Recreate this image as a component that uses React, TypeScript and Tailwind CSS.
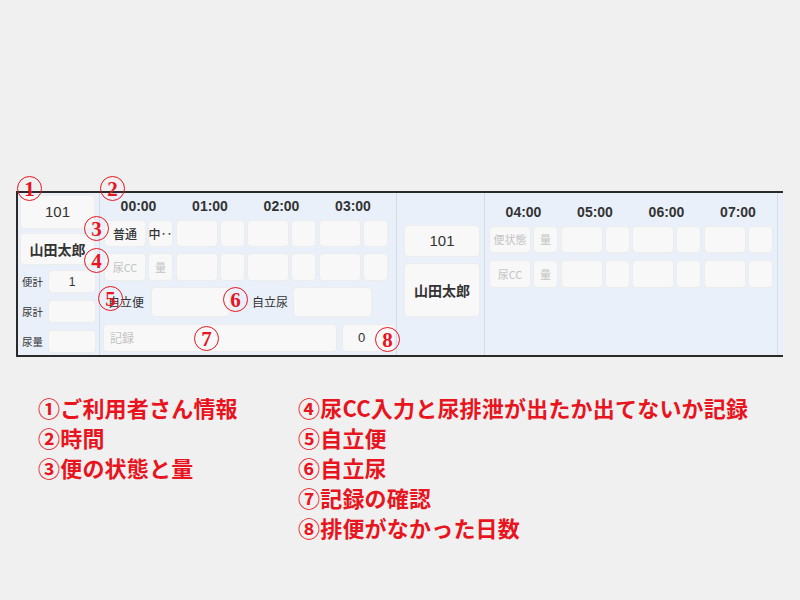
import React from "react";

const JP = { fontFamily: '"Noto Sans CJK JP", "Noto Sans", sans-serif' };
const LAT = { fontFamily: '"Liberation Sans", "Noto Sans CJK JP", sans-serif' };
const SERIF = { fontFamily: '"Liberation Serif", "DejaVu Serif", serif' };

function Cell({ w, h, children, tone = "dark" }: { w: string; h: string; children?: React.ReactNode; tone?: "dark" | "gray" }) {
  return (
    <div
      className={`${w} ${h} shrink-0 rounded-[4px] border border-[#ececec] bg-[#f8f8f8] flex items-center justify-center overflow-hidden whitespace-nowrap ${
        tone === "gray" ? "text-[#c4c4c4] text-[11px]" : "text-[#333] text-[12px] font-medium"
      }`}
    >
      {children}
    </div>
  );
}

function HourRow({ first, second, tone, h }: { first?: string; second?: string; tone?: "dark" | "gray"; h: string }) {
  return (
    <div className="flex gap-[2.5px]">
      {[0, 1, 2, 3].map((i) => (
        <div key={i} className="flex gap-[2px]">
          <Cell w="w-[42px]" h={h} tone={tone}>{i === 0 ? first : null}</Cell>
          <Cell w="w-[25px]" h={h} tone={tone}>{i === 0 ? second : null}</Cell>
        </div>
      ))}
    </div>
  );
}

function Header({ times }: { times: string[] }) {
  return (
    <div className="flex gap-[2.5px] h-[26px] items-center" style={LAT}>
      {times.map((t) => (
        <div key={t} className="w-[69px] text-center text-[14px] font-bold text-[#333]">
          {t}
        </div>
      ))}
    </div>
  );
}

function StatRow({ label, value, mt }: { label: string; value?: string; mt: string }) {
  return (
    <div className={`flex items-center ${mt}`}>
      <div className="w-[28px] pl-[2px] text-[10.5px] text-[#333]">{label}</div>
      <div className="w-[48px] h-[23px] rounded-[4px] border border-[#ececec] bg-[#f8f8f8] flex items-center justify-center text-[12px] text-[#333]" style={LAT}>
        {value}
      </div>
    </div>
  );
}

const RED = "text-[#e8141e]";

function Mark({ n, x, y }: { n: string; x: number; y: number }) {
  return (
    <div
      className="absolute w-[25px] h-[25px] rounded-full border-[1.5px] border-[#e8141e] flex items-center justify-center text-[#e8141e] font-bold text-[21px] leading-none"
      style={{ left: x, top: y, ...SERIF }}
    >
      <span className="mt-[1px]">{n}</span>
    </div>
  );
}

export default function App() {
  const legendL = ["①ご利用者さん情報", "②時間", "③便の状態と量"];
  const legendR = [
    "④尿CC入力と尿排泄が出たか出てないか記録",
    "⑤自立便",
    "⑥自立尿",
    "⑦記録の確認",
    "⑧排便がなかった日数",
  ];
  return (
    <div className="relative w-[800px] h-[600px] bg-[#f0f0f0] overflow-hidden" style={JP}>
      <div className="pt-[191px] pl-[16px]">
        <div className="w-[767px] h-[166px] border-t-2 border-b-2 border-l-2 border-[#2a2a2a] bg-[#e9f0f9] flex">
          {/* user col 1 */}
          <div className="w-[82px] shrink-0 border-r border-[#d6dce4] pl-[2px] pt-[2px]">
            <div className="w-[75px] h-[34px] rounded-[4px] border border-[#ececec] bg-[#f8f8f8] flex items-center justify-center text-[15px] text-[#333]" style={LAT}>
              101
            </div>
            <div className="mt-[4px] w-[75px] h-[32px] rounded-[4px] border border-[#ececec] bg-[#f8f8f8] flex items-center justify-center text-[14px] font-semibold text-[#333]">
              山田太郎
            </div>
            <StatRow label="便計" value="1" mt="mt-[5px]" />
            <StatRow label="尿計" mt="mt-[7px]" />
            <StatRow label="尿量" mt="mt-[7px]" />
          </div>
          {/* grid 1 */}
          <div className="w-[297px] shrink-0 border-r border-[#d6dce4] pl-[4px]">
            <Header times={["00:00", "01:00", "02:00", "03:00"]} />
            <div className="mt-[1px]">
              <HourRow first="普通" second="中‥" h="h-[27px]" />
            </div>
            <div className="mt-[6px]">
              <HourRow first="尿CC" second="量" tone="gray" h="h-[28px]" />
            </div>
            <div className="mt-[6px] flex items-center h-[30px]">
              <div className="w-[44px] pl-[4px] text-[12px] text-[#333]">自立便</div>
              <div className="ml-[3px] w-[79px] h-[30px] rounded-[4px] border border-[#ececec] bg-[#f8f8f8]" />
              <div className="ml-[22px] w-[36px] text-[12px] text-[#333] whitespace-nowrap">自立尿</div>
              <div className="ml-[5px] w-[79px] h-[30px] rounded-[4px] border border-[#ececec] bg-[#f8f8f8]" />
            </div>
            <div className="mt-[7px] flex items-center -ml-[1px]">
              <div className="w-[234px] h-[28px] rounded-[4px] border border-[#ececec] bg-[#f8f8f8] flex items-center pl-[6px] text-[12px] text-[#c4c4c4]">
                記録
              </div>
              <div className="ml-[5px] w-[53px] h-[28px] rounded-[4px] border border-[#ececec] bg-[#f8f8f8] flex items-center pl-[15px] text-[13px] text-[#333]" style={LAT}>
                0
              </div>
            </div>
          </div>
          {/* user col 2 */}
          <div className="w-[88px] shrink-0 border-r border-[#d6dce4] pl-[7px] pt-[32px]">
            <div className="w-[76px] h-[32px] rounded-[4px] border border-[#ececec] bg-[#f8f8f8] flex items-center justify-center text-[15px] text-[#333]" style={LAT}>
              101
            </div>
            <div className="mt-[6px] w-[76px] h-[54px] rounded-[4px] border border-[#ececec] bg-[#f8f8f8] flex items-center justify-center text-[14px] font-semibold text-[#333]">
              山田太郎
            </div>
          </div>
          {/* grid 2 */}
          <div className="w-[293px] shrink-0 border-r border-[#d6dce4] pl-[4px] pt-[6px]">
            <Header times={["04:00", "05:00", "06:00", "07:00"]} />
            <div className="mt-[1px]">
              <HourRow first="便状態" second="量" tone="gray" h="h-[27px]" />
            </div>
            <div className="mt-[7px]">
              <HourRow first="尿CC" second="量" tone="gray" h="h-[28px]" />
            </div>
          </div>
          <div className="w-[5px] shrink-0" />
        </div>
      </div>

      {/* legend */}
      <div className={`mt-[35px] flex ${RED} font-bold text-[22px] leading-[30px] tracking-[0.2px]`}>
        <div className="w-[298px] pl-[38px]">
          {legendL.map((t) => (
            <div key={t} className="whitespace-nowrap">{t}</div>
          ))}
        </div>
        <div>
          {legendR.map((t) => (
            <div key={t} className="whitespace-nowrap">{t}</div>
          ))}
        </div>
      </div>

      {/* annotation marks */}
      <Mark n="1" x={17} y={176} />
      <Mark n="2" x={100} y={176} />
      <Mark n="3" x={84} y={216} />
      <Mark n="4" x={84} y={248} />
      <Mark n="5" x={98} y={286} />
      <Mark n="6" x={223} y={287} />
      <Mark n="7" x={194} y={326} />
      <Mark n="8" x={375} y={327} />
    </div>
  );
}
